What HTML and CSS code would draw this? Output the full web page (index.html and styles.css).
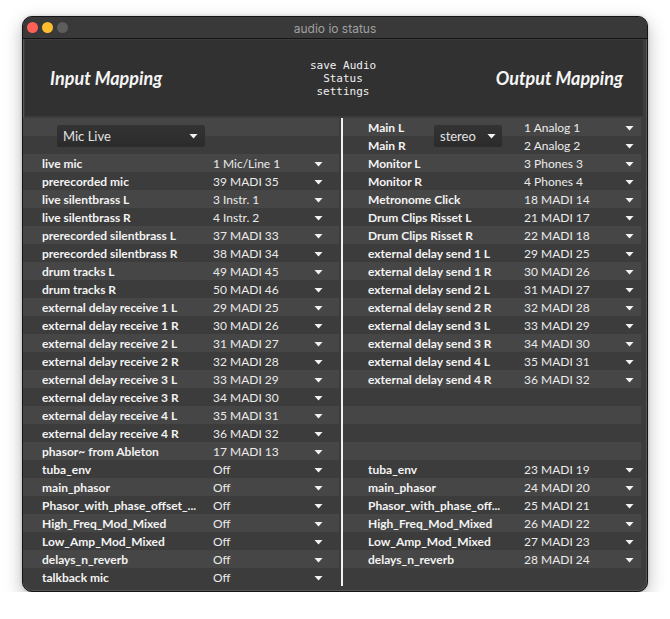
FILE: index.html
```html
<!DOCTYPE html>
<html lang="en">
<head>
<meta charset="utf-8">
<title>audio io status</title>
<link rel="stylesheet" href="styles.css">
</head>
<body>
<div class="page">
  <div class="window">
    <div class="titlebar">
      <div class="lights">
        <span class="light red"></span>
        <span class="light yellow"></span>
        <span class="light gray"></span>
      </div>
      <div class="title">audio io status</div>
    </div>
    <div class="content">
      <header class="hero">
        <h1 class="map-title in">Input Mapping</h1>
        <div class="save">save Audio<br>Status<br>settings</div>
        <h1 class="map-title out">Output Mapping</h1>
      </header>
      <div class="columns">
        <section class="col col-in">
          <div class="preset-row">
            <div class="dropdown preset"><span>Mic Live</span><span class="arrow"></span></div>
          </div>
          <div class="row"><span class="label">live mic</span><span class="value">1 Mic/Line 1</span><span class="arrow"></span></div>
          <div class="row"><span class="label">prerecorded mic</span><span class="value">39 MADI 35</span><span class="arrow"></span></div>
          <div class="row"><span class="label">live silentbrass L</span><span class="value">3 Instr. 1</span><span class="arrow"></span></div>
          <div class="row"><span class="label">live silentbrass R</span><span class="value">4 Instr. 2</span><span class="arrow"></span></div>
          <div class="row"><span class="label">prerecorded silentbrass L</span><span class="value">37 MADI 33</span><span class="arrow"></span></div>
          <div class="row"><span class="label">prerecorded silentbrass R</span><span class="value">38 MADI 34</span><span class="arrow"></span></div>
          <div class="row"><span class="label">drum tracks L</span><span class="value">49 MADI 45</span><span class="arrow"></span></div>
          <div class="row"><span class="label">drum tracks R</span><span class="value">50 MADI 46</span><span class="arrow"></span></div>
          <div class="row"><span class="label">external delay receive 1 L</span><span class="value">29 MADI 25</span><span class="arrow"></span></div>
          <div class="row"><span class="label">external delay receive 1 R</span><span class="value">30 MADI 26</span><span class="arrow"></span></div>
          <div class="row"><span class="label">external delay receive 2 L</span><span class="value">31 MADI 27</span><span class="arrow"></span></div>
          <div class="row"><span class="label">external delay receive 2 R</span><span class="value">32 MADI 28</span><span class="arrow"></span></div>
          <div class="row"><span class="label">external delay receive 3 L</span><span class="value">33 MADI 29</span><span class="arrow"></span></div>
          <div class="row"><span class="label">external delay receive 3 R</span><span class="value">34 MADI 30</span><span class="arrow"></span></div>
          <div class="row"><span class="label">external delay receive 4 L</span><span class="value">35 MADI 31</span><span class="arrow"></span></div>
          <div class="row"><span class="label">external delay receive 4 R</span><span class="value">36 MADI 32</span><span class="arrow"></span></div>
          <div class="row"><span class="label">phasor~ from Ableton</span><span class="value">17 MADI 13</span><span class="arrow"></span></div>
          <div class="row"><span class="label">tuba_env</span><span class="value">Off</span><span class="arrow"></span></div>
          <div class="row"><span class="label">main_phasor</span><span class="value">Off</span><span class="arrow"></span></div>
          <div class="row"><span class="label">Phasor_with_phase_offset_...</span><span class="value">Off</span><span class="arrow"></span></div>
          <div class="row"><span class="label">High_Freq_Mod_Mixed</span><span class="value">Off</span><span class="arrow"></span></div>
          <div class="row"><span class="label">Low_Amp_Mod_Mixed</span><span class="value">Off</span><span class="arrow"></span></div>
          <div class="row"><span class="label">delays_n_reverb</span><span class="value">Off</span><span class="arrow"></span></div>
          <div class="row"><span class="label">talkback mic</span><span class="value">Off</span><span class="arrow"></span></div>
        </section>
        <div class="divider"></div>
        <section class="col col-out">
          <div class="pair">
            <div class="row"><span class="label">Main L</span><span class="value">1 Analog 1</span><span class="arrow"></span></div>
            <div class="row"><span class="label">Main R</span><span class="value">2 Analog 2</span><span class="arrow"></span></div>
            <div class="dropdown stereo"><span>stereo</span><span class="arrow"></span></div>
          </div>
          <div class="row"><span class="label">Monitor L</span><span class="value">3 Phones 3</span><span class="arrow"></span></div>
          <div class="row"><span class="label">Monitor R</span><span class="value">4 Phones 4</span><span class="arrow"></span></div>
          <div class="row"><span class="label">Metronome Click</span><span class="value">18 MADI 14</span><span class="arrow"></span></div>
          <div class="row"><span class="label">Drum Clips Risset L</span><span class="value">21 MADI 17</span><span class="arrow"></span></div>
          <div class="row"><span class="label">Drum Clips Risset R</span><span class="value">22 MADI 18</span><span class="arrow"></span></div>
          <div class="row"><span class="label">external delay send 1 L</span><span class="value">29 MADI 25</span><span class="arrow"></span></div>
          <div class="row"><span class="label">external delay send 1 R</span><span class="value">30 MADI 26</span><span class="arrow"></span></div>
          <div class="row"><span class="label">external delay send 2 L</span><span class="value">31 MADI 27</span><span class="arrow"></span></div>
          <div class="row"><span class="label">external delay send 2 R</span><span class="value">32 MADI 28</span><span class="arrow"></span></div>
          <div class="row"><span class="label">external delay send 3 L</span><span class="value">33 MADI 29</span><span class="arrow"></span></div>
          <div class="row"><span class="label">external delay send 3 R</span><span class="value">34 MADI 30</span><span class="arrow"></span></div>
          <div class="row"><span class="label">external delay send 4 L</span><span class="value">35 MADI 31</span><span class="arrow"></span></div>
          <div class="row"><span class="label">external delay send 4 R</span><span class="value">36 MADI 32</span><span class="arrow"></span></div>
          <div class="row empty"></div>
          <div class="row empty"></div>
          <div class="row empty"></div>
          <div class="row empty"></div>
          <div class="row"><span class="label">tuba_env</span><span class="value">23 MADI 19</span><span class="arrow"></span></div>
          <div class="row"><span class="label">main_phasor</span><span class="value">24 MADI 20</span><span class="arrow"></span></div>
          <div class="row"><span class="label">Phasor_with_phase_off...</span><span class="value">25 MADI 21</span><span class="arrow"></span></div>
          <div class="row"><span class="label">High_Freq_Mod_Mixed</span><span class="value">26 MADI 22</span><span class="arrow"></span></div>
          <div class="row"><span class="label">Low_Amp_Mod_Mixed</span><span class="value">27 MADI 23</span><span class="arrow"></span></div>
          <div class="row"><span class="label">delays_n_reverb</span><span class="value">28 MADI 24</span><span class="arrow"></span></div>
          <div class="row empty"></div>
        </section>
      </div>
    </div>
  </div>
</div>
</body>
</html>
```

FILE: styles.css
```css
* { box-sizing: border-box; }

html, body {
  margin: 0;
  padding: 0;
  background: #ffffff;
}

body {
  font-family: Lato, "Noto Sans", sans-serif;
}

.page {
  padding: 16px 0 0 22px;
}

.window {
  width: 626px;
  height: 576px;
  background: #3c3c3c;
  border: 1px solid #151515;
  border-radius: 10px;
  overflow: hidden;
  box-shadow: inset 0 0 0 1px #565656, 0 6px 18px rgba(0, 0, 0, 0.28), 0 0 3px rgba(0, 0, 0, 0.2);
  display: flex;
  flex-direction: column;
}

.titlebar {
  height: 22px;
  flex: none;
  background: #393939;
  border-bottom: 1px solid #141414;
  display: grid;
  grid-template-columns: 1fr auto 1fr;
  align-items: center;
}

.lights {
  display: flex;
  gap: 4px;
  padding-left: 4px;
}

.light {
  width: 11px;
  height: 11px;
  border-radius: 50%;
}

.light.red { background: #fe5f57; }
.light.yellow { background: #febc2e; }
.light.gray { background: #5d5d5d; }

.title {
  font-family: Inter, "Noto Sans", sans-serif;
  font-size: 12px;
  color: #a0a0a0;
  padding-top: 1px;
}

.content {
  flex: 1;
  display: flex;
  flex-direction: column;
}

.hero {
  height: 76px;
  margin: 1px 4px 0 2px;
  background: #313131;
  display: grid;
  grid-template-columns: 285px 66px 1fr;
  align-items: center;
}

.map-title {
  margin: 0;
  font-family: Lato, sans-serif;
  font-weight: 700;
  font-style: italic;
  font-size: 18px;
  color: #f5f5f5;
}

.map-title.in { padding-left: 25px; }
.map-title.out { justify-self: end; padding-right: 20px; }

.save {
  font-family: "DejaVu Sans Mono", "Liberation Mono", monospace;
  font-size: 11px;
  line-height: 13px;
  color: #f0f0f0;
  text-align: center;
  white-space: nowrap;
}

.columns {
  margin: 2px 4px 0 0;
  height: 468px;
  display: grid;
  grid-template-columns: 316px 2px 2px 298px;
}

.col {
  grid-row: 1;
  background: repeating-linear-gradient(to bottom, #464646 0 18px, #3c3c3c 18px 36px);
}

.col-in { grid-column: 1; }
.divider { grid-column: 3; background: #f2f2f2; }
.col-out { grid-column: 4; }

.row {
  height: 18px;
  display: grid;
  align-items: center;
  font-size: 12px;
  line-height: 18px;
  white-space: nowrap;
  padding-top: 1px;
}

.col-in .row {
  grid-template-columns: 171px 1fr 9px;
  padding-left: 19px;
  padding-right: 16px;
}

.col-out .row {
  grid-template-columns: 156px 1fr 9px;
  padding-left: 25px;
  padding-right: 7px;
}

.label {
  font-weight: 700;
  color: #f3f3f3;
  overflow: hidden;
}

.value {
  font-weight: 400;
  color: #ebebeb;
}

.arrow {
  display: block;
  width: 9px;
  height: 5px;
  background: #f2f2f2;
  clip-path: polygon(0 0, 100% 0, 50% 100%);
}

.preset-row {
  height: 36px;
  padding: 7px 0 0 34px;
}

.dropdown {
  height: 22px;
  display: flex;
  align-items: center;
  justify-content: space-between;
  background: linear-gradient(to bottom, #333333, #2b2b2b);
  border-radius: 2px;
  font-size: 13px;
  color: #e2e2e2;
}

.dropdown.preset {
  width: 148px;
  padding: 0 7px 0 6px;
}

.pair {
  position: relative;
}

.dropdown.stereo {
  position: absolute;
  left: 91px;
  top: 7px;
  width: 68px;
  padding: 0 6px 0 6px;
}
```
